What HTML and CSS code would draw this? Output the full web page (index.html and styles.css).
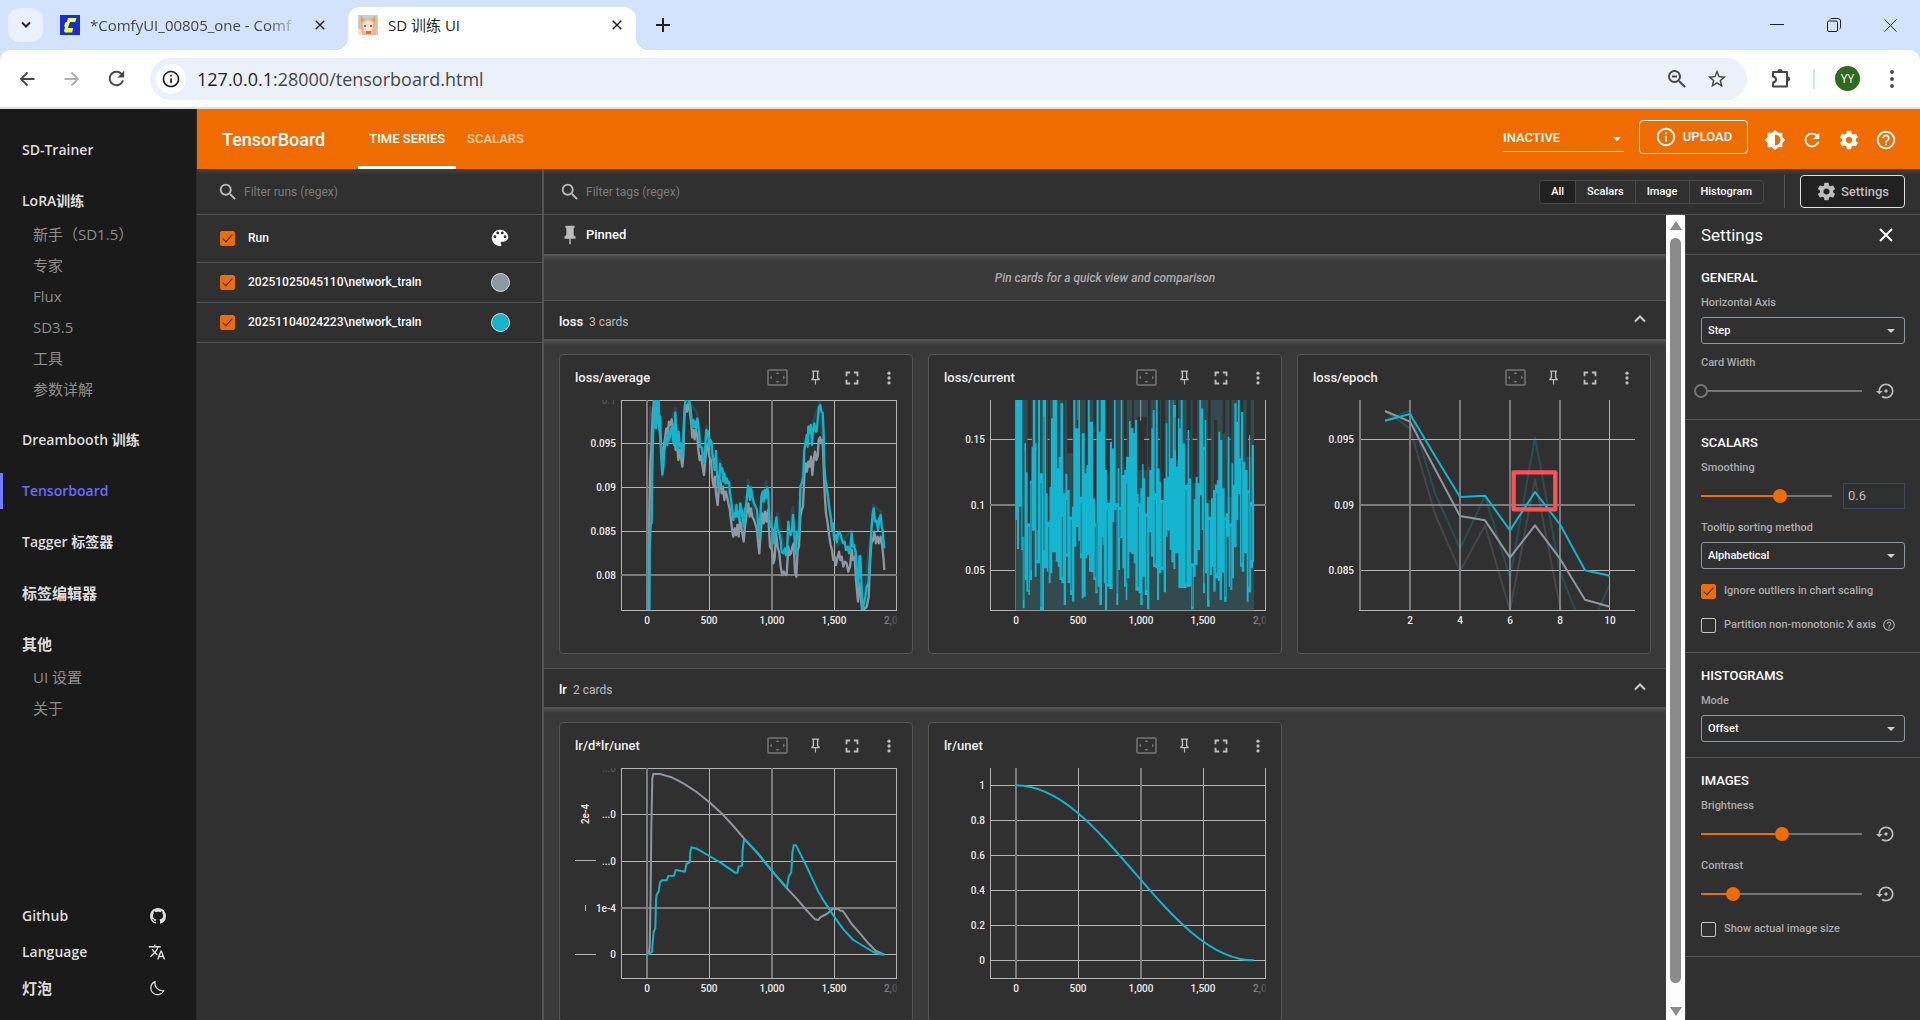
FILE: index.html
```
<!DOCTYPE html>
<html lang="zh-CN">
<head>
<meta charset="utf-8">
<title>SD 训练 UI</title>
<link rel="stylesheet" href="styles.css">
</head>
<body>
<svg class="sprite" aria-hidden="true">
  <symbol id="i-search" viewBox="0 0 24 24"><path d="M15.5 14h-.79l-.28-.27A6.471 6.471 0 0016 9.5 6.5 6.5 0 109.5 16c1.61 0 3.09-.59 4.23-1.57l.27.28v.79l5 4.99L20.49 19l-4.99-5zm-6 0C7.01 14 5 11.99 5 9.5S7.01 5 9.5 5 14 7.01 14 9.5 11.99 14 9.5 14z"/></symbol>
  <symbol id="i-palette" viewBox="0 0 24 24"><path d="M12 3a9 9 0 000 18c.83 0 1.5-.67 1.5-1.5 0-.39-.15-.74-.39-1.01-.23-.26-.38-.61-.38-.99 0-.83.67-1.5 1.5-1.5H16c2.76 0 5-2.24 5-5 0-4.42-4.03-8-9-8zm-5.5 9c-.83 0-1.5-.67-1.5-1.5S5.67 9 6.5 9 8 9.67 8 10.5 7.33 12 6.5 12zm3-4C8.67 8 8 7.33 8 6.5S8.67 5 9.5 5s1.5.67 1.5 1.5S10.33 8 9.5 8zm5 0c-.83 0-1.5-.67-1.5-1.5S13.67 5 14.5 5s1.5.67 1.5 1.5S15.33 8 14.5 8zm3 4c-.83 0-1.5-.67-1.5-1.5S16.67 9 17.5 9s1.5.67 1.5 1.5-.67 1.5-1.5 1.5z"/></symbol>
  <symbol id="i-keep" viewBox="0 0 24 24"><path d="M16 12V4h1V2H7v2h1v8l-2 2v2h5.2v6h1.6v-6H18v-2l-2-2z"/></symbol>
  <symbol id="i-pin" viewBox="0 0 24 24"><path d="M16,12V4H17V2H7V4H8V12L6,14V16H11.2V22H12.8V16H18V14L16,12M8.8,14L10,12.8V4H14V12.8L15.2,14H8.8Z"/></symbol>
  <symbol id="i-full" viewBox="0 0 24 24"><path d="M7 14H5v5h5v-2H7v-3zm-2-4h2V7h3V5H5v5zm12 7h-3v2h5v-5h-2v3zM14 5v2h3v3h2V5h-5z"/></symbol>
  <symbol id="i-more" viewBox="0 0 24 24"><circle cx="12" cy="5.500" r="2.200"/><circle cx="12" cy="12" r="2.200"/><circle cx="12" cy="18.500" r="2.200"/></symbol>
  <symbol id="i-fit" viewBox="0 0 22 18"><rect x="1" y="1" width="19" height="15" rx="1" fill="none" stroke="currentColor" stroke-width="1.500"/><path d="M10.500 3l2 2h-4zM10.500 14l2-2h-4zM3 8.500l2-2v4zM18 8.500l-2-2v4z"/></symbol>
  <symbol id="i-gear" viewBox="0 0 24 24"><path d="M19.43 12.98c.04-.32.07-.64.07-.98s-.03-.66-.07-.98l2.11-1.65c.19-.15.24-.42.12-.64l-2-3.46c-.12-.22-.39-.3-.61-.22l-2.49 1c-.52-.4-1.08-.73-1.69-.98l-.38-2.65A.488.488 0 0014 2h-4c-.25 0-.46.18-.49.42l-.38 2.65c-.61.25-1.17.59-1.69.98l-2.49-1c-.23-.09-.49 0-.61.22l-2 3.46c-.13.22-.07.49.12.64l2.11 1.65c-.04.32-.07.65-.07.98s.03.66.07.98l-2.11 1.65c-.19.15-.24.42-.12.64l2 3.46c.12.22.39.3.61.22l2.49-1c.52.4 1.08.73 1.69.98l.38 2.65c.03.24.24.42.49.42h4c.25 0 .46-.18.49-.42l.38-2.65c.61-.25 1.17-.59 1.69-.98l2.49 1c.23.09.49 0 .61-.22l2-3.46c.12-.22.07-.49-.12-.64l-2.11-1.65zM12 15.5c-1.93 0-3.5-1.57-3.5-3.5s1.57-3.5 3.5-3.5 3.500 1.570 3.500 3.500-1.570 3.500-3.500 3.500z"/></symbol>
  <symbol id="i-help" viewBox="0 0 24 24"><path d="M11 18h2v-2h-2v2zm1-16C6.48 2 2 6.48 2 12s4.48 10 10 10 10-4.480 10-10S17.52 2 12 2zm0 18c-4.41 0-8-3.59-8-8s3.59-8 8-8 8 3.590 8 8-3.590 8-8 8zm0-14c-2.21 0-4 1.79-4 4h2c0-1.100.9-2 2-2s2 .9 2 2c0 2-3 1.750-3 5h2c0-2.250 3-2.500 3-5 0-2.210-1.790-4-4-4z"/></symbol>
  <symbol id="i-info" viewBox="0 0 24 24"><path d="M11 17h2v-6h-2v6zm1-15C6.48 2 2 6.48 2 12s4.48 10 10 10 10-4.480 10-10S17.52 2 12 2zm0 18c-4.41 0-8-3.59-8-8s3.59-8 8-8 8 3.590 8 8-3.590 8-8 8zM11 9h2V7h-2v2z"/></symbol>
  <symbol id="i-refresh" viewBox="0 0 24 24"><path d="M17.65 6.35C16.2 4.9 14.21 4 12 4c-4.42 0-7.990 3.580-7.990 8s3.570 8 7.990 8c3.730 0 6.840-2.550 7.730-6h-2.080c-.82 2.330-3.040 4-5.650 4-3.310 0-6-2.690-6-6s2.690-6 6-6c1.660 0 3.140.69 4.220 1.780L13 11h7V4l-2.350 2.350z"/></symbol>
  <symbol id="i-bright" viewBox="0 0 24 24"><path d="M20 15.31L23.31 12 20 8.690V4h-4.690L12 .69 8.690 4H4v4.690L.69 12 4 15.310V20h4.690L12 23.310 15.310 20H20v-4.690zM12 18V6c3.310 0 6 2.690 6 6s-2.690 6-6 6z"/></symbol>
  <symbol id="i-reset" viewBox="0 0 24 24"><path d="M14 12c0-1.100-.9-2-2-2s-2 .9-2 2 .9 2 2 2 2-.9 2-2zm-2-9c-4.970 0-9 4.030-9 9H0l4 4 4-4H5c0-3.870 3.130-7 7-7s7 3.130 7 7-3.130 7-7 7c-1.510 0-2.910-.49-4.060-1.300l-1.420 1.440C8.040 20.300 9.940 21 12 21c4.970 0 9-4.030 9-9s-4.030-9-9-9z"/></symbol>
  <symbol id="i-translate" viewBox="0 0 24 24"><path d="M12.87 15.07l-2.540-2.510.03-.03A17.520 17.520 0 0014.070 6H17V4h-7V2H8v2H1v1.990h11.170C11.500 7.920 10.440 9.750 9 11.350 8.070 10.320 7.300 9.190 6.690 8h-2c.73 1.630 1.730 3.170 2.980 4.560l-5.090 5.020L4 19l5-5 3.110 3.110.76-2.040zM18.500 10h-2L12 22h2l1.120-3h4.750L21 22h2l-4.500-12zm-2.620 7l1.620-4.330L19.120 17h-3.240z"/></symbol>
  <symbol id="i-github" viewBox="0 0 16 16"><path d="M8 0C3.58 0 0 3.58 0 8c0 3.54 2.29 6.53 5.47 7.59.4.07.55-.17.55-.38 0-.19-.01-.82-.01-1.49-2.01.37-2.53-.49-2.69-.94-.09-.23-.48-.94-.82-1.13-.28-.15-.68-.52-.01-.53.63-.01 1.08.58 1.23.82.72 1.21 1.87.87 2.33.66.07-.52.28-.87.51-1.07-1.78-.2-3.64-.89-3.64-3.95 0-.87.31-1.59.82-2.15-.08-.2-.36-1.02.08-2.12 0 0 .67-.21 2.2.82.64-.18 1.32-.27 2-.27s1.36.09 2 .27c1.53-1.04 2.2-.82 2.2-.82.44 1.1.16 1.92.08 2.12.51.56.82 1.27.82 2.15 0 3.07-1.87 3.75-3.65 3.95.29.25.54.73.54 1.48 0 1.07-.01 1.93-.01 2.2 0 .21.15.46.55.38A8.01 8.01 0 0016 8c0-4.42-3.58-8-8-8z"/></symbol>
  <symbol id="i-moon" viewBox="0 0 24 24"><path d="M9.500 3.500A9 9 0 1 0 21 15.500 10 10 0 0 1 9.500 3.500z" fill="none" stroke="currentColor" stroke-width="1.600" stroke-linejoin="round"/></symbol>
  <symbol id="i-star" viewBox="0 0 24 24"><path d="M22 9.24l-7.19-.62L12 2 9.19 8.63 2 9.24l5.46 4.73L5.82 21 12 17.27 18.18 21l-1.63-7.03L22 9.24zM12 15.4l-3.76 2.27 1-4.28-3.32-2.88 4.38-.38L12 6.1l1.71 4.04 4.38.38-3.32 2.88 1 4.28L12 15.4z"/></symbol>
  <symbol id="i-x" viewBox="0 0 14 14"><path d="M1 1l12 12M13 1L1 13" fill="none" stroke="currentColor" stroke-width="2"/></symbol>
</svg>

<header class="browser">
  <div class="tabstrip">
    <button class="tab-search" aria-label="Search tabs"><svg width="12" height="8" viewBox="0 0 12 8"><path d="M2 1.500l4 4 4-4" fill="none" stroke="currentColor" stroke-width="2"/></svg></button>
    <div class="tab">
      <svg class="favicon" viewBox="0 0 20 20"><rect width="20" height="20" fill="#172dd7"/><path d="M8 3h8.500l-1.200 4H10l-2.200 6h5.500l-1.200 4.500H5l-1-1.500 1.200-4.500H4L5.500 7H7z" fill="#f0ff41"/></svg>
      <span class="tab-title faded">*ComfyUI_00805_one - Comf</span>
      <button class="tab-close" aria-label="Close tab"><svg width="10" height="10"><use href="#i-x"/></svg></button>
    </div>
    <div class="tab active">
      <svg class="favicon" viewBox="0 0 20 20"><rect width="20" height="20" fill="#b8d4dc"/><path d="M2 0l5 3h6l5-3 1 8-1 12H2L1 8z" fill="#eab98c"/><path d="M5 8q5-5 10 0l-1 8q-4 4-8 0z" fill="#fbe3d3"/><path d="M3 1l3 4-3 3zM17 1l-3 4 3 3z" fill="#d99a76"/><path d="M6 10h2v2H6zM12 10h2v2h-2z" fill="#9a6a86"/><path d="M8 16h5v3H8z" fill="#d26a68"/><path d="M0 14h3l1 6H0z" fill="#f2dfe0"/></svg>
      <span class="tab-title">SD 训练 UI</span>
      <button class="tab-close" aria-label="Close tab"><svg width="10" height="10"><use href="#i-x"/></svg></button>
    </div>
    <button class="new-tab" aria-label="New tab"><svg width="14" height="14" viewBox="0 0 14 14"><path d="M7 0v14M0 7h14" stroke="currentColor" stroke-width="2"/></svg></button>
    <div class="window-buttons">
      <button aria-label="Minimize"><svg width="14" height="14" viewBox="0 0 14 14"><path d="M0 6.500h14" stroke="currentColor"/></svg></button>
      <button aria-label="Restore"><svg width="14" height="14" viewBox="0 0 14 14"><rect x=".5" y="3" width="10" height="10.500" rx="1.500" fill="none" stroke="currentColor"/><path d="M3 1.500q.5-1 1.500-1H11q2.500 0 2.500 2.500v6.500q0 1-1 1.500" fill="none" stroke="currentColor"/></svg></button>
      <button aria-label="Close window"><svg width="13" height="13" viewBox="0 0 13 13"><path d="M.5.5l12 12M12.500.5l-12 12" stroke="currentColor"/></svg></button>
    </div>
  </div>
  <div class="toolbar">
    <button class="nav-btn" aria-label="Back"><svg width="16" height="16" viewBox="0 0 16 16"><path d="M15.500 8H2M8.500 1.500L2 8l6.500 6.500" fill="none" stroke="currentColor" stroke-width="1.800"/></svg></button>
    <button class="nav-btn off" aria-label="Forward"><svg width="16" height="16" viewBox="0 0 16 16"><path d="M.5 8H14M7.500 1.500L14 8l-6.500 6.500" fill="none" stroke="currentColor" stroke-width="1.800"/></svg></button>
    <button class="nav-btn" aria-label="Reload"><svg width="23" height="23"><use href="#i-refresh"/></svg></button>
    <div class="omnibox">
      <button class="site-info" aria-label="Site information"><svg width="20" height="20"><use href="#i-info"/></svg></button>
      <span class="url"><b>127.0.0.1</b>:28000/tensorboard.html</span>
      <button class="omni-btn" aria-label="Zoom"><svg width="20" height="20" viewBox="0 0 20 20"><path d="M12 12l6 6M5 7.500h5" fill="none" stroke="currentColor" stroke-width="2"/><circle cx="7.500" cy="7.500" r="5.500" fill="none" stroke="currentColor" stroke-width="2"/></svg></button>
      <button class="omni-btn" aria-label="Bookmark"><svg width="22" height="22"><use href="#i-star"/></svg></button>
    </div>
    <button class="ext" aria-label="Extensions"><svg width="22" height="22" viewBox="0 0 22 22"><path d="M3 4h14v14.500H3v-4q3-.5 3-3t-3-3z" fill="none" stroke="currentColor" stroke-width="2" stroke-linejoin="round"/><path d="M7.500 3.500a2.500 2.500 0 0 1 5 0zM17.500 8.500a2.500 2.500 0 0 1 0 5z"/></svg></button>
    <span class="sep"></span>
    <button class="avatar">YY</button>
    <button class="menu" aria-label="Menu"><svg width="24" height="24" viewBox="0 0 24 24"><circle cx="12" cy="5" r="1.900"/><circle cx="12" cy="12" r="1.900"/><circle cx="12" cy="19" r="1.900"/></svg></button>
  </div>
</header>

<div class="page">
  <aside class="sidebar">
    <nav>
      <a class="item" href="#">SD-Trainer</a>
      <a class="item" href="#">LoRA训练</a>
      <ul>
        <li><a href="#">新手（SD1.5）</a></li>
        <li><a href="#">专家</a></li>
        <li><a href="#">Flux</a></li>
        <li><a href="#">SD3.5</a></li>
        <li><a href="#">工具</a></li>
        <li><a href="#">参数详解</a></li>
      </ul>
      <a class="item" href="#">Dreambooth 训练</a>
      <a class="item current" href="#">Tensorboard</a>
      <a class="item" href="#">Tagger 标签器</a>
      <a class="item han" href="#">标签编辑器</a>
      <a class="item han" href="#">其他</a>
      <ul>
        <li><a href="#">UI 设置</a></li>
        <li><a href="#">关于</a></li>
      </ul>
    </nav>
    <div class="side-foot">
      <a href="#">Github<svg width="16" height="16"><use href="#i-github"/></svg></a>
      <a href="#">Language<svg width="18" height="18"><use href="#i-translate"/></svg></a>
      <a class="han" href="#">灯泡<svg width="18" height="18"><use href="#i-moon"/></svg></a>
    </div>
  </aside>

  <div class="board">
    <header class="tb-head">
      <h1>TensorBoard</h1>
      <nav class="tb-tabs"><a class="on" href="#">TIME SERIES</a><a href="#">SCALARS</a></nav>
      <span class="pick inactive"><select aria-label="Inactive plugins"><option>INACTIVE</option></select></span>
      <button class="upload"><svg width="22" height="22"><use href="#i-info"/></svg>UPLOAD</button>
      <button class="tb-icon" aria-label="Theme"><svg width="22" height="22"><use href="#i-bright"/></svg></button>
      <button class="tb-icon" aria-label="Reload"><svg width="22" height="22"><use href="#i-refresh"/></svg></button>
      <button class="tb-icon" aria-label="Settings"><svg width="22" height="22"><use href="#i-gear"/></svg></button>
      <button class="tb-icon" aria-label="Help"><svg width="22" height="22"><use href="#i-help"/></svg></button>
    </header>

    <div class="tb-body">
      <section class="runs">
        <label class="filter"><svg width="22" height="22"><use href="#i-search"/></svg><input type="text" placeholder="Filter runs (regex)"></label>
        <table>
          <thead><tr><th class="c-check"><input type="checkbox" aria-label="All runs" checked></th><th>Run</th><th class="c-color"><button aria-label="Colors"><svg width="22" height="22"><use href="#i-palette"/></svg></button></th></tr></thead>
          <tbody>
            <tr><td class="c-check"><input id="r1" type="checkbox" checked></td><td><label for="r1">20251025045110\network_train</label></td><td class="c-color"><button class="dot gray" aria-label="Run color"></button></td></tr>
            <tr><td class="c-check"><input id="r2" type="checkbox" checked></td><td><label for="r2">20251104024223\network_train</label></td><td class="c-color"><button class="dot teal" aria-label="Run color"></button></td></tr>
          </tbody>
        </table>
      </section>

      <section class="metrics">
        <div class="bar">
          <label class="filter"><svg width="22" height="22"><use href="#i-search"/></svg><input type="text" placeholder="Filter tags (regex)"></label>
          <div class="kinds"><button class="on">All</button><button>Scalars</button><button>Image</button><button>Histogram</button></div>
          <div class="bar-settings"><button class="settings-btn"><svg width="21" height="21"><use href="#i-gear"/></svg>Settings</button></div>
        </div>
        <div class="split">
          <main>
            <div class="group-head pinned"><svg width="22" height="22"><use href="#i-keep"/></svg><h2>Pinned</h2></div>
            <p class="empty">Pin cards for a quick view and comparison</p>

            <div class="group">
              <div class="group-head"><h2>loss</h2><span>3 cards</span><button aria-label="Collapse"><svg width="12" height="8" viewBox="0 0 12 8"><path d="M1 6.500l5-5 5 5" fill="none" stroke="currentColor" stroke-width="2"/></svg></button></div>
              <div class="cards">
                <article class="card">
                  <header><h3>loss/average</h3><button class="dim" aria-label="Fit domain"><svg width="22" height="18"><use href="#i-fit"/></svg></button><button aria-label="Pin card"><svg width="17" height="17"><use href="#i-pin"/></svg></button><button aria-label="Full size"><svg width="22" height="22"><use href="#i-full"/></svg></button><button aria-label="More"><svg width="18" height="18"><use href="#i-more"/></svg></button></header>
                  <svg class="chart" viewBox="0 0 322 230">
                    <defs><linearGradient id="fade"><stop offset="0" stop-color="#bbb" stop-opacity=".7"/><stop offset="1" stop-color="#bbb" stop-opacity=".1"/></linearGradient><clipPath id="plot"><rect x="46" y="0" width="276" height="210"/></clipPath></defs>
                    <path class="grid" d="M46.500 0V210M134.500 0V210M259.500 0V210M321.500 0V210M46 43.500H322M46 87.500H322M46 131.500H322M46 210.500H322M46 .5H322"/><path class="grid soft" d="M72 0V210M197 0V210M46 175H322"/>
                    <g clip-path="url(#plot)"><g transform="translate(-25 -50) scale(.33333)">
                      <polyline class="s-gray raw" points="296,781 298,400 301,170 306,200"/>
                      <polyline class="s-gray thick" points="297,781 298,500 301,340 304,300 308,200 312,150 325,150 329,240 333,290 337,340 341,290 345,265 349,235 353,250 357,215 361,225 365,208 369,235 373,260 377,300 381,280 385,330 389,300 393,325 397,350 400,320 403,200 407,165 411,185 415,160 419,180 423,215 427,262 431,240 434,268 438,240 442,260 445,300 449,330 453,318 457,345 462,375 466,330 470,290 474,280 478,320 483,330 487,385 491,410 495,380 498,430 503,465 507,410 511,390 515,430 519,410 523,450 527,425 531,440 535,460 539,475 543,510 547,545 550,560 554,535 558,555 562,525 566,560 570,510 574,530 578,555 581,575 585,530 590,490 595,460 599,500 603,475 607,500 612,510 617,525 621,540 625,585 628,610 632,550 637,490 641,520 645,485 649,515 654,480 657,540 660,590 666,600 670,640 674,625 678,550 683,590 688,610 692,650 697,675 701,665 705,672 710,675 715,590 719,615 723,610 727,590 731,580 735,665 739,680 743,600 747,590 751,500 755,480 759,470 763,380 767,340 771,365 775,335 779,350 783,320 787,375 791,330 795,305 799,330 803,320 806,270 810,262 814,280 818,270 821,350 824,430 828,490 833,520 838,560 842,585 846,600 850,630 854,620 858,645 862,625 867,605 871,630 875,620 880,650 885,635 890,640 895,665 900,650 905,600 909,630 914,620 918,690 924,755 928,700 932,735 936,781 945,775 950,770 956,740 960,640 964,580 969,570 973,545 978,580 983,560 987,580 992,560 997,590 1001,630 1003,660"/>
                      <polyline class="s-teal haze" points="313,150 331,200 337,380 349,262 376,175 386,300 396,330 404,170 421,160 442,190 463,348 469,230 490,340 510,330 547,490 568,460 581,540 594,390 628,570 648,395 672,595 683,490 708,620 729,470 738,620 763,290 786,230 809,155 823,350 846,540 861,590 880,570 905,540 925,710 938,781 971,465 992,485 1003,595"/>
                      <polyline class="s-teal thick" points="298,781 299,600 302,520 305,520 308,300 311,200 313,150 315,230 318,235 319,150 322,220 325,150 328,240 331,200 333,310 337,373 340,350 343,300 346,280 349,262 352,285 355,245 358,270 362,240 366,230 369,270 372,285 376,188 379,260 382,300 386,245 389,290 393,280 396,320 399,290 401,240 404,170 407,150 417,150 421,170 424,200 426,230 430,210 432,232 436,215 439,235 442,205 445,225 448,260 450,290 455,292 460,330 463,338 466,290 469,240 474,245 477,290 480,268 484,275 487,310 490,330 494,360 498,303 500,360 503,395 507,420 510,342 514,365 517,355 520,395 523,370 527,400 530,385 534,400 537,395 540,430 544,455 547,480 550,510 553,490 556,500 559,465 562,500 565,485 568,510 571,460 575,480 577,500 581,530 584,480 588,470 591,440 594,408 598,435 600,450 603,412 607,440 612,460 617,470 621,480 625,530 628,560 631,500 634,440 638,425 641,455 644,420 648,445 652,412 655,430 657,490 660,530 667,532 669,570 672,580 675,530 679,502 683,540 688,550 692,570 695,605 700,610 705,595 708,615 711,605 715,515 718,545 722,555 726,540 729,495 732,530 735,590 738,612 741,545 745,560 748,530 751,410 757,395 760,380 763,300 767,275 770,255 773,290 775,230 779,250 782,225 786,285 789,240 793,220 797,245 800,245 803,210 807,172 811,165 814,185 818,188 821,250 823,350 826,390 830,410 834,440 838,475 843,505 846,540 849,520 853,570 857,555 861,577 864,550 868,545 872,555 876,570 880,580 884,575 888,600 893,590 897,610 900,600 905,550 908,590 912,585 917,605 921,680 925,710 928,620 931,618 934,690 936,740 938,781 942,760 946,740 950,710 955,700 958,660 961,600 965,530 968,490 971,475 975,515 980,512 984,540 988,505 992,495 995,530 998,540 1001,580 1003,595"/>
                    </g></g>
                    <g class="tick y"><text x="41" y="47">0.095</text><text x="41" y="91">0.09</text><text x="41" y="135">0.085</text><text x="41" y="179">0.08</text><text class="ghost" x="41" y="4">0.1</text></g>
                    <g class="tick x"><text x="72" y="224">0</text><text x="134" y="224">500</text><text x="197" y="224">1,000</text><text x="259" y="224">1,500</text></g><text class="tick last" x="309" y="224">2,0</text>
                  </svg>
                </article>

                <article class="card">
                  <header><h3>loss/current</h3><button class="dim" aria-label="Fit domain"><svg width="22" height="18"><use href="#i-fit"/></svg></button><button aria-label="Pin card"><svg width="17" height="17"><use href="#i-pin"/></svg></button><button aria-label="Full size"><svg width="22" height="22"><use href="#i-full"/></svg></button><button aria-label="More"><svg width="18" height="18"><use href="#i-more"/></svg></button></header>
                  <svg class="chart" viewBox="0 0 322 230">
                    <path class="grid" d="M46.500 0V210M321.500 0V210M46 39.500H322M46 170.500H322M46 210.500H322"/><path class="grid soft" d="M72 0V210M46 105H322"/>
                    <g transform="translate(-24 -50) scale(.33333)">
                      <rect x="287" y="150" width="715" height="630" fill="#14b5cf"/>
                      <clipPath id="cut"><path id="cut-top" d="M307 150V560H313V280H318V367H323V520H329V392H334V290H339V150H346V280H350V540H354V150H360V370H368V150H378V430H383V515H388V410H393V205H398V150H411V355H416V320H421V160H430V430H436V372H442V420H449V500H456V470H460V150H466V235H475V150H480V440H485V250H494V370H499V345H503V150H509V215H519V445H526V520H530V150H536V245H542V150H556V360H562V458H569V275H576V295H581V150H587V460H593V355H598V470H602V150H607V375H613V360H618V320H627V213H632V235H640V250H645V210H651V432H656V460H661V415H666V342H671V385H676V490H681V440H688V360H694V235H698V180H704V430H708V150H713V355H719V395H724V450H730V385H737V220H742V380H746V150H751V325H758V150H761V165H768V350H773V205H778V235H782V150H788V280H795V405H802V240H808V385H813V640H821V448H826V380H833V400H838V150H843V175H850V290H854V210H859V460H866V500H873V445H879V420H885V405H890V390H895V245H901V270H907V415H914V500H918V490H923V260H929V520H934V340H939V405H943V160H950V215H954V150H959V325H963V185H970V335H976V360H983V420H987V255H991V455H995V285H1002V150Z"/></clipPath>
                      <use href="#cut-top" fill="#314b4f"/>
                      <g clip-path="url(#cut)" fill="#303030"><path d="M323 150h12v390h-12zM384 150h5v360h-5zM430 150h4v270h-4zM441 150h18v160h-18zM471 150h4v120h-4zM497 150h6v200h-6zM520 150h8v320h-8zM557 150h18v300h-18zM577 150h5v150h-5zM612 150h8v200h-8zM636 150h6v80h-6zM652 200h28v160h-28zM684 150h8v200h-8zM714 150h5v210h-5zM723 150h12v300h-12zM768 150h6v180h-6zM800 150h12v250h-12zM818 150h14v250h-14zM864 150h8v300h-8zM882 210h10v190h-10zM908 150h8v100h-8zM928 150h6v290h-6zM962 150h8v180h-8zM980 150h12v170h-12z"/><path d="M322 268h14M383 268h6M442 268h16M488 268h8M520 268h10M557 268h18M612 268h8M672 268h16M714 268h6M800 268h10M818 268h14M860 268h14M926 268h6M984 268h8" stroke="#b5b5b5" stroke-width="3"/><path d="M474 150v60M662 150v62" stroke="#999" stroke-width="3"/></g>
                      <path fill="#314b4f" d="M287 781V510H291V595H297V470H304V600H308V775H314V690H319V725H325V735H330V690H336V540H344V680H350V640H360V780H372V655H380V665H386V700H392V670H397V605H407V635H413V650H418V690H424V700H431V765H438V620H443V700H450V735H456V755H463V590H469V530H475V570H480V625H485V745H491V740H497V625H502V615H507V665H520V690H526V730H533V710H538V765H546V585H551V700H555V780H561V710H568V715H578V515H583V480H589V765H595V660H600V565H607V655H612V710H617V750H622V685H628V605H633V610H641V640H646V722H656V730H661V765H668V680H674V735H681V778H688V545H693V620H699V650H706V655H711V750H717V670H724V660H731V725H738V560H743V540H749V600H754V635H760V655H766V610H775V712H800V708H813V778H821V680H827V645H833V600H840V435H845V540H849V730H855V670H861V770H869V675H876V650H880V725H887V685H893V690H899V750H906V668H912V755H920V560H926V710H931V720H937V685H942V590H950V510H955V430H960V650H965V665H973V610H980V755H986V725H993V655H999V635H1002V781Z"/>
                      <path d="M312 300v450M326 530v190M351 300v330M363 400v370M386 530v150M440 450v160M454 510v210M484 460v150M526 530v150M562 480v220M591 470v260M600 480v80M655 470v240M680 500v220M706 450v190M727 460v190M798 420v280M817 650v120M868 510v240M890 430v240M916 510v230M932 530v180M965 330v310M994 470v160M333 400v260M372 200v400M427 500v180M531 520v200M548 560v80M620 400v300M765 200v100M853 300v400M986 430v280" stroke="#2a5a62" stroke-opacity=".55" stroke-width="4"/>
                      <path d="M291 595h6M337 540h7M398 605h9M470 530h5M475 570h5M514 665h6M569 715h9M580 515h3M629 605h4M635 610h6M689 545h4M700 650h5M732 725h6M744 540h5M755 635h5M761 655h5M776 712h24M801 708h10M841 435h4M894 690h5M944 590h5M956 430h4M987 725h6M290 165h6M297 180h3" stroke="#8c8fa0" stroke-width="4"/>
                    </g>
                    <g class="tick y"><text x="41" y="43">0.15</text><text x="41" y="109">0.1</text><text x="41" y="174">0.05</text></g>
                    <g class="tick x"><text x="72" y="224">0</text><text x="134" y="224">500</text><text x="197" y="224">1,000</text><text x="259" y="224">1,500</text></g><text class="tick last" x="309" y="224">2,0</text>
                  </svg>
                </article>

                <article class="card">
                  <header><h3>loss/epoch</h3><button class="dim" aria-label="Fit domain"><svg width="22" height="18"><use href="#i-fit"/></svg></button><button aria-label="Pin card"><svg width="17" height="17"><use href="#i-pin"/></svg></button><button aria-label="Full size"><svg width="22" height="22"><use href="#i-full"/></svg></button><button aria-label="More"><svg width="18" height="18"><use href="#i-more"/></svg></button></header>
                  <svg class="chart" viewBox="0 0 322 230">
                    <path class="grid" d="M296.500 0V210M46 39.500H322M46 170.500H322M46 210.500H322"/><path class="grid soft" d="M47 0V210M97 0V210M147 0V210M197 0V210M247 0V210M46 105H322"/>
                    <g clip-path="url(#plot)"><g transform="translate(-23 -50) scale(.33333)">
                      <polyline class="s-gray raw" points="285,183 360,235 435,492 510,664 585,526 660,781 735,388 810,770 815,781"/>
                      <polyline class="s-teal raw" points="285,212 360,181 435,430 510,596 585,438 660,682 735,262 810,664 856,781"/>
                      <polyline class="s-teal raw" points="924,781 960,702"/>
                      <polyline class="s-gray" points="285,183 360,215 435,357 510,498 585,511 660,623 735,526 810,626 885,749 960,770"/>
                      <polyline class="s-teal" points="285,212 360,192 435,318 510,441 585,437 660,541 735,426 810,523 885,661 960,677"/>
                      <rect x="671" y="367" width="125" height="111" fill="none" stroke="#ff5252" stroke-width="13" stroke-linejoin="round"/>
                    </g></g>
                    <g class="tick y"><text x="41" y="43">0.095</text><text x="41" y="109">0.09</text><text x="41" y="174">0.085</text></g>
                    <g class="tick x"><text x="97" y="224">2</text><text x="147" y="224">4</text><text x="197" y="224">6</text><text x="247" y="224">8</text><text x="297" y="224">10</text></g>
                  </svg>
                </article>
              </div>
            </div>

            <div class="group">
              <div class="group-head"><h2>lr</h2><span>2 cards</span><button aria-label="Collapse"><svg width="12" height="8" viewBox="0 0 12 8"><path d="M1 6.500l5-5 5 5" fill="none" stroke="currentColor" stroke-width="2"/></svg></button></div>
              <div class="cards">
                <article class="card">
                  <header><h3>lr/d*lr/unet</h3><button class="dim" aria-label="Fit domain"><svg width="22" height="18"><use href="#i-fit"/></svg></button><button aria-label="Pin card"><svg width="17" height="17"><use href="#i-pin"/></svg></button><button aria-label="Full size"><svg width="22" height="22"><use href="#i-full"/></svg></button><button aria-label="More"><svg width="18" height="18"><use href="#i-more"/></svg></button></header>
                  <svg class="chart" viewBox="0 0 322 230">
                    <path class="grid" d="M46.500 0V210M134.500 0V210M259.500 0V210M321.500 0V210M46 .5H322M46 46.500H322M46 93.500H322M46 186.500H322M46 210.500H322M0 92.500H21M0 186.500H21"/><path class="grid soft" d="M72 0V210M197 0V210M46 140H322"/>
                    <g transform="translate(-25 -108) scale(.33333)">
                      <polyline class="s-gray" points="296,883 299,860 302,700 304,500 307,355 310,342 330,342 347,347 365,352 385,362 405,373 440,396 480,428 520,465 550,498 582,535 625,582 665,632 708,682 740,716 770,751 795,778 805,780 812,771 830,762 845,750 853,744 858,748 864,746 870,752 877,752 884,760 905,792 930,820 955,850 978,873 1003,884"/>
                      <polyline class="s-teal" points="291,884 300,880 306,875 311,815 316,805 318,720 320,704 326,694 330,668 335,661 350,661 355,648 372,647 377,630 405,635 409,612 419,607 421,575 424,562 440,566 478,588 515,610 555,638 562,638 566,620 576,617 578,570 582,538 590,544 625,582 665,632 706,678 711,682 716,650 724,636 727,580 731,556 738,556 770,620 805,695 825,728 850,766 880,808 910,840 940,858 970,876 988,882 1003,884"/>
                    </g>
                    <g class="tick y"><text x="41" y="50">...0</text><text x="41" y="97">...0</text><text x="41" y="144">1e-4</text><text x="41" y="190">0</text><text class="ghost" x="41" y="4">...0</text></g>
                    <text class="tick mid" x="14" y="46" transform="rotate(-90 14 46)">2e-4</text><path class="grid" d="M10.500 137V143"/>
                    <g class="tick x"><text x="72" y="224">0</text><text x="134" y="224">500</text><text x="197" y="224">1,000</text><text x="259" y="224">1,500</text></g><text class="tick last" x="309" y="224">2,0</text>
                  </svg>
                </article>
                <article class="card">
                  <header><h3>lr/unet</h3><button class="dim" aria-label="Fit domain"><svg width="22" height="18"><use href="#i-fit"/></svg></button><button aria-label="Pin card"><svg width="17" height="17"><use href="#i-pin"/></svg></button><button aria-label="Full size"><svg width="22" height="22"><use href="#i-full"/></svg></button><button aria-label="More"><svg width="18" height="18"><use href="#i-more"/></svg></button></header>
                  <svg class="chart" viewBox="0 0 322 230">
                    <path class="grid" d="M46.500 0V210M134.500 0V210M259.500 0V210M321.500 0V210M46 17.500H322M46 52.500H322M46 87.500H322M46 122.500H322M46 157.500H322M46 192.500H322M46 210.500H322"/><path class="grid soft" d="M72 0V210M197 0V210"/>
                    <g transform="translate(-24 -108) scale(.33333)"><path class="line s-teal" d="M288 376C548 376 741 901 1001 901"/></g>
                    <g class="tick y"><text x="41" y="21">1</text><text x="41" y="56">0.8</text><text x="41" y="91">0.6</text><text x="41" y="126">0.4</text><text x="41" y="161">0.2</text><text x="41" y="196">0</text></g>
                    <g class="tick x"><text x="72" y="224">0</text><text x="134" y="224">500</text><text x="197" y="224">1,000</text><text x="259" y="224">1,500</text></g><text class="tick last" x="309" y="224">2,0</text>
                  </svg>
                </article>
              </div>
            </div>
          </main>

          <div class="scrollbar" aria-hidden="true"><i class="up"></i><i class="thumb"></i><i class="down"></i></div>

          <aside class="settings">
            <header><h2>Settings</h2><button aria-label="Close settings"><svg width="14" height="14"><use href="#i-x"/></svg></button></header>
            <section>
              <h3>GENERAL</h3>
              <div class="field"><label for="axis">Horizontal Axis</label><span class="pick"><select id="axis"><option>Step</option></select></span></div>
              <div class="field"><label for="cw">Card Width</label><div class="row"><input id="cw" class="hollow" type="range" min="0" max="100" value="0" style="--fill:0"><button class="reset" aria-label="Reset card width"><svg width="20" height="20"><use href="#i-reset"/></svg></button></div></div>
            </section>
            <section>
              <h3>SCALARS</h3>
              <div class="field"><label for="sm">Smoothing</label><div class="row"><input id="sm" type="range" min="0" max="1" step=".001" value=".6" style="--fill:.6"><input class="num" type="text" aria-label="Smoothing value" value="0.6"></div></div>
              <div class="field"><label for="sort">Tooltip sorting method</label><span class="pick"><select id="sort"><option>Alphabetical</option></select></span></div>
              <label class="check"><input type="checkbox" checked>Ignore outliers in chart scaling</label>
              <label class="check"><input type="checkbox">Partition non-monotonic X axis<svg width="14" height="14"><use href="#i-help"/></svg></label>
            </section>
            <section>
              <h3>HISTOGRAMS</h3>
              <div class="field"><label for="mode">Mode</label><span class="pick"><select id="mode"><option>Offset</option></select></span></div>
            </section>
            <section>
              <h3>IMAGES</h3>
              <div class="field"><label for="br">Brightness</label><div class="row"><input id="br" type="range" min="0" max="2" step=".01" value="1" style="--fill:.5"><button class="reset" aria-label="Reset brightness"><svg width="20" height="20"><use href="#i-reset"/></svg></button></div></div>
              <div class="field"><label for="co">Contrast</label><div class="row"><input id="co" type="range" min="0" max="5" step=".01" value="1" style="--fill:.2"><button class="reset" aria-label="Reset contrast"><svg width="20" height="20"><use href="#i-reset"/></svg></button></div></div>
              <label class="check"><input type="checkbox">Show actual image size</label>
            </section>
          </aside>
        </div>
      </section>
    </div>
  </div>
</div>
</body>
</html>
```
FILE: styles.css
```
* { box-sizing: border-box; }
body, h1, h2, h3, p, ul { margin: 0; padding: 0; }
ul { list-style: none; }
a { color: inherit; text-decoration: none; }
button { margin: 0; padding: 0; border: 0; background: none; color: inherit; font: inherit; display: inline-flex; align-items: center; justify-content: center; }
input, select { margin: 0; font: inherit; color: inherit; }
svg { display: block; fill: currentColor; flex: none; }
.sprite { position: absolute; width: 0; height: 0; }

body { display: flex; flex-direction: column; height: 100vh; overflow: hidden; background: #303030; font-family: Roboto, "Noto Sans CJK SC", sans-serif; font-size: 12px; line-height: 16px; color: #fff; }

/* browser frame */
.browser { font-family: "Open Sans", "Noto Sans CJK SC", sans-serif; color: #1f1f1f; background: #d3e3fd; }
.tabstrip { display: flex; align-items: center; height: 50px; padding-left: 8px; }
.tab-search { width: 35px; height: 34px; border-radius: 12px; background: #e9f1fe; }
.tab { display: flex; align-items: center; align-self: flex-end; width: 288px; height: 43px; padding: 0 0 7px 17px; margin-right: 17px; position: relative; }
.tab.active { padding-left: 10px; margin-right: 0; background: #fff; border-radius: 12px 12px 0 0; }
.tab.active::before, .tab.active::after { content: ""; position: absolute; bottom: 0; width: 12px; height: 12px; }
.tab.active::before { left: -12px; background: radial-gradient(circle at 0 0, transparent 12px, #fff 12px); }
.tab.active::after { right: -12px; background: radial-gradient(circle at 100% 0, transparent 12px, #fff 12px); }
.favicon { width: 20px; height: 20px; }
.tab-title { flex: 1; margin-left: 10px; font-size: 15px; line-height: 20px; white-space: nowrap; overflow: hidden; }
.faded { color: #474747; -webkit-mask-image: linear-gradient(90deg, #000 85%, transparent); mask-image: linear-gradient(90deg, #000 85%, transparent); }
.tab-close { width: 20px; height: 20px; margin: 0 1px 0 10px; }
.tab.active .tab-close { margin-right: 9px; }
.new-tab { margin-left: 20px; }
.window-buttons { display: flex; margin-left: auto; padding-right: 1px; }
.window-buttons button { width: 57px; height: 50px; }
.toolbar { display: flex; align-items: center; height: 59px; background: #fff; border-radius: 10px 10px 0 0; border-bottom: 2px solid #dfe1e5; padding: 0 16px 0 4px; color: #474747; }
.nav-btn { width: 45px; height: 40px; }
.nav-btn.off { color: #b0b0b0; }
.omnibox { flex: 1; display: flex; align-items: center; height: 42px; margin-left: 11px; padding: 0 18px 0 6px; border-radius: 21px; background: #ebf0fa; }
.site-info { width: 30px; height: 30px; border-radius: 50%; background: #fff; color: #1f1f1f; }
.url { flex: 1; margin-left: 11px; font-size: 18px; line-height: 24px; }
.url b { font-weight: 400; color: #1f1f1f; }
.omni-btn { width: 24px; height: 24px; margin-left: 16px; }
.ext { width: 24px; margin-left: 22px; }
.sep { width: 2px; height: 20px; margin: 0 20px; background: #d3e3fd; }
.avatar { width: 25px; height: 25px; border-radius: 50%; background: #2f6b1e; color: #fff; font-size: 12px; }
.menu { width: 24px; margin-left: 20px; }

/* trainer sidebar */
.page { flex: 1; display: flex; min-height: 0; }
.sidebar { flex: none; display: flex; flex-direction: column; justify-content: space-between; width: 197px; padding: 23px 0 14px; background: #1a1a1a; border-right: 1px solid #2c2c2c; font-family: "Open Sans", "Noto Sans CJK SC", sans-serif; font-size: 14px; color: #dedede; }
.item { display: flex; align-items: center; height: 36px; margin-bottom: 15px; padding-left: 22px; font-weight: 600; }
.item:has(+ ul) { margin-bottom: 0; }
.item.current { border-left: 3px solid #7a7aff; padding-left: 19px; color: #6c6cff; }
.sidebar .han { font-size: 15px; }
.sidebar ul { padding: 0 0 2px 33px; margin-bottom: 15px; font-size: 15px; line-height: 31px; color: #8e8e8e; }
.side-foot a { display: flex; align-items: center; justify-content: space-between; height: 36px; padding: 0 30px 0 22px; font-weight: 600; }

/* TensorBoard header */
.board { flex: 1; display: flex; flex-direction: column; min-width: 0; }
.tb-head { display: flex; align-items: center; height: 60px; padding: 1px 23px 0 25px; background: #ef6c00; }
.tb-head h1 { font-size: 18px; line-height: 24px; font-weight: 500; }
.tb-tabs { display: flex; align-self: stretch; margin: 0 auto 0 33px; font-size: 13px; font-weight: 500; }
.tb-tabs a { display: flex; align-items: center; padding: 1px 11px 0; border-bottom: 3px solid transparent; color: #ffd0a8; }
.tb-tabs a.on { border-color: #fff; color: #fff; }
.pick { display: block; position: relative; }
.pick::after { content: ""; position: absolute; right: 10px; top: 50%; margin-top: -2px; border: 4px solid transparent; border-top-color: #cfcfcf; border-bottom: 0; }
.pick select { appearance: none; width: 100%; height: 27px; padding: 0 6px; border: 1px solid #8e98a3; border-radius: 3px; background: #303030; font-size: 11px; font-weight: 500; color: #fff; }
.inactive { width: 121px; margin: 0 15px 2px 0; }
.inactive::after { right: 3px; border-top-color: #fff; }
.inactive select { padding: 0; border: 0; border-bottom: 1px solid #fff; border-radius: 0; background: transparent; font-size: 13px; }
.upload { width: 109px; height: 34px; margin: 0 16px 5px 0; gap: 6px; border: 1px solid #fff; border-radius: 4px; font-size: 13px; font-weight: 500; }
.tb-icon { margin-left: 15px; }
.upload + .tb-icon { margin-left: 0; }

/* runs column */
.tb-body { flex: 1; display: flex; min-height: 0; }
.runs { flex: none; width: 347px; border-right: 2px solid #555; }
.filter { display: flex; align-items: center; height: 46px; padding: 0 0 0 20px; border-bottom: 1px solid #555; background: linear-gradient(#424242, #303030 6px); color: #bdbdbd; }
.filter input { flex: 1; min-width: 0; margin-left: 5px; padding: 0; border: 0; background: none; outline: 0; }
.filter input::placeholder { color: #7d7d7d; }
.runs table { width: 100%; border-collapse: collapse; text-align: left; font-weight: 500; }
.runs th { font-weight: 500; height: 47px; }
.runs td { height: 40px; }
.runs th, .runs td { padding: 0; border-bottom: 1px solid #555; }
.runs .c-check { width: 51px; padding-left: 23px; }
.c-color { width: 84px; text-align: center; }
.c-color button { vertical-align: middle; }
.dot { width: 19px; height: 19px; border-radius: 50%; border: 1px solid #ddd; }
.dot.gray { background: #8e98a3; }
.dot.teal { background: #12b5cb; }
input[type="checkbox"] { appearance: none; flex: none; display: grid; place-items: center; width: 15px; height: 15px; border: 1px solid #c4c4c4; border-radius: 2px; }
input[type="checkbox"]:checked { border-color: #ef6c00; background: #ef6c00; }
input[type="checkbox"]:checked::before { content: ""; width: 4px; height: 9px; margin-top: -2px; border: solid #303030; border-width: 0 1px 1px 0; transform: rotate(42deg); }

/* metrics area */
.metrics { flex: 1; display: flex; flex-direction: column; min-width: 0; }
.bar { display: flex; align-items: center; height: 46px; padding-right: 15px; border-bottom: 1px solid #555; background: linear-gradient(#424242, #303030 6px); }
.bar .filter { flex: 1; height: 45px; padding-left: 15px; border: 0; background: none; }
.kinds { display: flex; height: 24px; border: 1px solid #4a4a4a; border-radius: 4px; overflow: hidden; font-size: 11px; font-weight: 500; }
.kinds button { padding: 0 11px; }
.kinds button + button { border-left: 1px solid #4a4a4a; }
.kinds .on { background: #212121; }
.bar-settings { margin-left: 20px; padding-left: 15px; border-left: 1px solid #555; }
.settings-btn { width: 105px; height: 33px; gap: 4px; border: 1px solid #e0e0e0; border-radius: 4px; background: #212121; color: #bdbdbd; font-size: 13px; font-weight: 500; }
.split { flex: 1; display: flex; min-height: 0; }
main { flex: 1; min-width: 0; overflow: hidden; background: #3a3a3a; }
.group { border-top: 1px solid #555; }
.group-head { display: flex; align-items: center; height: 40px; padding: 3px 20px 0 15px; border-bottom: 2px solid #555; background: #303030; }
.group-head h2 { font-size: 13px; font-weight: 500; }
.group-head span { margin: 0 auto 0 6px; color: #bdbdbd; }
.group-head button { color: #ccc; padding-bottom: 6px; }
.pinned { height: 41px; padding-top: 0; color: #bdbdbd; }
.pinned h2 { margin-left: 5px; color: #fff; }
.empty { height: 44px; line-height: 44px; text-align: center; font-style: italic; font-weight: 500; color: #ababab; background: linear-gradient(#4a4a4a, #3a3a3a 5px); }
.cards { display: grid; grid-template-columns: repeat(3, 1fr); gap: 15px; padding: 13px 15px 14px; background: linear-gradient(#4a4a4a, #3a3a3a 5px); }
.card { height: 300px; padding: 0 15px; border: 1px solid #555; border-radius: 4px; background: #303030; }
.card header { display: flex; align-items: center; gap: 15px; height: 45px; margin-right: -3px; color: #bdbdbd; }
.card h3 { flex: 1; font-size: 13px; font-weight: 500; color: #f0f0f0; }
.card header button { width: 22px; height: 22px; }
.card .dim { color: #757575; }
.chart { width: 100%; overflow: hidden; }
.grid { fill: none; stroke: #b4b4b4; }
.soft { stroke: #7c7c7c; stroke-width: 2; }
.chart polyline, .chart .line { fill: none; stroke-width: 6; stroke-linejoin: round; }
.chart .s-gray { stroke: #8e98a3; }
.chart .s-teal { stroke: #12b5cb; }
.chart .thick { stroke-width: 7; }
.chart .raw { opacity: .22; }
.chart .haze { opacity: .2; stroke-width: 8; }
.tick { font-size: 10px; font-weight: 500; fill: #eee; }
.y text { text-anchor: end; }
.x text, .mid { text-anchor: middle; }
.tick .ghost { fill: #555; }
.last { fill: url(#fade); }

.scrollbar { flex: none; display: flex; flex-direction: column; align-items: center; width: 19px; padding: 6px 0 4px; background: #fcfcfc; }
.scrollbar i { display: block; }
.up, .down { border: 6px solid transparent; }
.up { border-top: 0; border-bottom: 9px solid #8b8b8b; }
.down { border-bottom: 0; border-top: 9px solid #8b8b8b; }
.thumb { flex: 1; width: 11px; margin: 8px 0 24px; border-radius: 6px; background: #8b8b8b; }

/* settings pane */
.settings { flex: none; width: 235px; border-left: 1px solid #444; background: #303030; }
.settings header { display: flex; align-items: center; justify-content: space-between; height: 40px; padding: 1px 27px 0 15px; border-bottom: 1px solid #555; }
.settings h2 { font-size: 17px; line-height: 20px; font-weight: 400; }
.settings section { display: grid; gap: 11px; padding: 15px 15px 15px; border-bottom: 1px solid #555; }
.settings h3 { margin-bottom: -2px; font-size: 13px; font-weight: 500; }
.field { display: grid; gap: 6px; }
.field > label, .check { color: #ababab; font-size: 11px; font-weight: 500; }
.row { display: flex; align-items: center; height: 27px; }
.row input[type="range"] { flex: 1; min-width: 0; }
.reset { width: 20px; margin: 0 9px 0 7px; color: #bdbdbd; }
.num { width: 62px; height: 26px; margin-left: 4px; padding: 0 4px; border: 1px solid #3b4a63; background: none; font-size: 13px; color: #bdbdbd; }
input[type="range"] { appearance: none; height: 14px; margin: 0 0 0 -7px; background: linear-gradient(#ef6c00, #ef6c00) 7px center / calc((100% - 14px) * var(--fill)) 2px no-repeat, linear-gradient(#757575, #757575) 7px center / calc(100% - 14px) 2px no-repeat; }
input[type="range"]::-webkit-slider-thumb { appearance: none; width: 14px; height: 14px; border-radius: 50%; background: #ef6c00; }
input.hollow::-webkit-slider-thumb { background: #303030; border: 2px solid #757575; }
.check { display: flex; align-items: center; gap: 8px; height: 16px; margin: 3px 0 4px; white-space: nowrap; }
.check svg { margin-left: -2px; }
```
